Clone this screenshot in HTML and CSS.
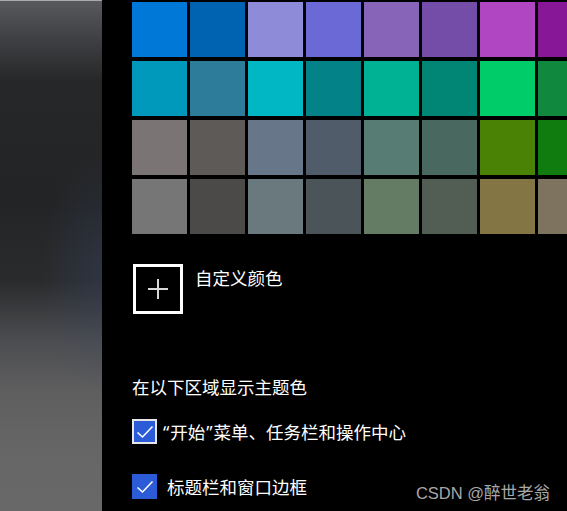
FILE: index.html
```html
<!DOCTYPE html>
<html lang="zh-CN">
<head>
  <meta charset="UTF-8" />
  <meta name="viewport" content="width=device-width, initial-scale=1.0"/>
  <title>颜色</title>
  <link rel="stylesheet" href="styles.css">
</head>
<body>

  <div class="side"></div>

  <div class="content">
    <div class="swatches">
      <div class="swatch" style="background:#0078d7"></div>
      <div class="swatch" style="background:#0063b1"></div>
      <div class="swatch" style="background:#8e8cd8"></div>
      <div class="swatch" style="background:#6b69d6"></div>
      <div class="swatch" style="background:#8764b8"></div>
      <div class="swatch" style="background:#744da9"></div>
      <div class="swatch" style="background:#b146c2"></div>
      <div class="swatch" style="background:#881798"></div>

      <div class="swatch" style="background:#0099bc"></div>
      <div class="swatch" style="background:#2d7d9a"></div>
      <div class="swatch" style="background:#00b7c3"></div>
      <div class="swatch" style="background:#038387"></div>
      <div class="swatch" style="background:#00b294"></div>
      <div class="swatch" style="background:#018574"></div>
      <div class="swatch" style="background:#00cc6a"></div>
      <div class="swatch" style="background:#10893e"></div>

      <div class="swatch" style="background:#7a7574"></div>
      <div class="swatch" style="background:#5d5a58"></div>
      <div class="swatch" style="background:#68768a"></div>
      <div class="swatch" style="background:#515c6b"></div>
      <div class="swatch" style="background:#567c73"></div>
      <div class="swatch" style="background:#486860"></div>
      <div class="swatch" style="background:#498205"></div>
      <div class="swatch" style="background:#107c10"></div>

      <div class="swatch" style="background:#767676"></div>
      <div class="swatch" style="background:#4c4a48"></div>
      <div class="swatch" style="background:#69797e"></div>
      <div class="swatch" style="background:#4a5459"></div>
      <div class="swatch" style="background:#647c64"></div>
      <div class="swatch" style="background:#525e54"></div>
      <div class="swatch" style="background:#847545"></div>
      <div class="swatch" style="background:#7e735f"></div>
    </div>

    <div class="custom">
      <div class="plus-box"><span class="plus"></span></div>
      <span class="custom-label">自定义颜色</span>
    </div>

    <div class="section-title">在以下区域显示主题色</div>

    <div class="check-row">
      <span class="check focused">
        <svg width="18" height="14" viewBox="0 0 18 14"><path d="M1.5 7.5 L6.5 12 L16.5 1.5" fill="none" stroke="#fff" stroke-width="1.6"/></svg>
      </span>
      <span class="check-label"><span class="quote first">“</span>开始<span class="quote">”</span>菜单、任务栏和操作中心</span>
    </div>

    <div class="check-row second">
      <span class="check">
        <svg width="18" height="14" viewBox="0 0 18 14"><path d="M1.5 7.5 L6.5 12 L16.5 1.5" fill="none" stroke="#fff" stroke-width="1.6"/></svg>
      </span>
      <span class="check-label">标题栏和窗口边框</span>
    </div>
  </div>

  <div class="watermark">CSDN @醉世老翁</div>

</body>
</html>
```

FILE: styles.css
```css
body {
  margin: 0;
  width: 567px;
  height: 511px;
  overflow: hidden;
  background: #000;
  color: #fff;
  font-family: "Microsoft YaHei", "Noto Sans CJK SC", sans-serif;
  display: flex;
  position: relative;
}

.side {
  width: 102px;
  flex-shrink: 0;
  border-top: 1px solid #a9a9a9;
  box-sizing: border-box;
  background:
    radial-gradient(ellipse 60px 120px at 100% 270px, rgba(55, 70, 105, 0.35), rgba(55, 70, 105, 0) 100%),
    linear-gradient(180deg, #58595c 0px, #3e3f42 40px, #262728 80px, #232425 200px, #2a2b2d 280px, #4c4d50 340px, #5e5e5f 390px, #666 450px, #686868 511px);
}

.content {
  padding: 2px 0 0 30px;
  flex: 1;
  min-width: 0;
}

.swatches {
  display: grid;
  grid-template-columns: repeat(8, 55px);
  grid-auto-rows: 55px;
  column-gap: 3px;
  row-gap: 4px;
}

.custom {
  display: flex;
  align-items: center;
  margin-top: 30px;
  margin-left: 1px;
}

.plus-box {
  width: 50px;
  height: 50px;
  box-sizing: border-box;
  border: 3px solid #fff;
  display: flex;
  align-items: center;
  justify-content: center;
}

.plus {
  position: relative;
  width: 20px;
  height: 20px;
}

.plus::before,
.plus::after {
  content: "";
  position: absolute;
  background: #d6d6d6;
}

.plus::before {
  left: 0;
  top: 9px;
  width: 20px;
  height: 2px;
}

.plus::after {
  left: 9px;
  top: 0;
  width: 2px;
  height: 20px;
}

.custom-label {
  margin-left: 12px;
  margin-top: -23px;
  font-size: 17.5px;
  line-height: 24px;
}

.section-title {
  margin-top: 61px;
  font-size: 17.5px;
  line-height: 24px;
}

.check-row {
  display: flex;
  align-items: center;
  margin-top: 20px;
  height: 25px;
}

.check-row.second {
  margin-top: 30px;
}

.check {
  width: 25px;
  height: 25px;
  box-sizing: border-box;
  background: #2b5bd6;
  display: flex;
  align-items: center;
  justify-content: center;
  flex-shrink: 0;
}

.check.focused {
  border: 2px solid #e6e6e6;
}

.check-label {
  margin-left: 10px;
  font-size: 17.5px;
  line-height: 24px;
}

.quote {
  font-family: "Noto Sans", sans-serif;
  margin: 0 1px;
}

.quote.first {
  margin-left: -4px;
}

.watermark {
  position: absolute;
  right: 17px;
  bottom: 7px;
  font-family: "Liberation Sans", "Noto Sans CJK SC", sans-serif;
  font-size: 16.5px;
  color: #a8a8a8;
}
```
